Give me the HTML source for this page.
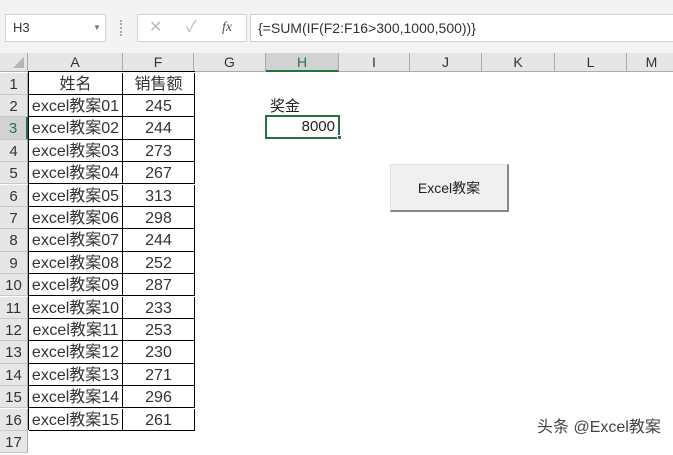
<!DOCTYPE html><html><head><style>
body{margin:0;width:673px;height:444px;overflow:hidden;background:#fff;font-family:"Liberation Sans","Noto Sans CJK SC",sans-serif;position:relative}
.a{position:absolute;box-sizing:border-box}
.ch{position:absolute;top:53px;height:19px;background:#e6e6e6;border-right:1px solid #ababab;border-bottom:1px solid #ababab;text-align:center;font-size:14px;line-height:19px;color:#333;box-sizing:border-box}
.rh{position:absolute;left:0;width:28px;background:#e6e6e6;border-bottom:1px solid #c8c8c8;border-right:1px solid #ababab;text-align:center;font-size:15px;color:#333;box-sizing:border-box}
.c{position:absolute;font-size:16px;color:#333;text-align:center;box-sizing:border-box;border-right:1px solid #000;border-bottom:1px solid #000;white-space:nowrap}
</style></head><body>
<div class="a" style="left:0;top:0;width:673px;height:53px;background:#f3f3f3"></div>
<div class="a" style="left:5px;top:14px;width:101px;height:28px;background:#fff;border:1px solid #d4d4d4;font-size:13px;line-height:26px;padding-left:7px;color:#333">H3<span style="position:absolute;left:87px;top:0;font-size:8px;color:#777">▼</span></div>
<div class="a" style="left:120px;top:20px;width:2px;height:16px;border-left:2px dotted #aaa"></div>
<div class="a" style="left:137px;top:14px;width:110px;height:28px;background:#fff;border:1px solid #d4d4d4;font-size:16px;line-height:26px;color:#bbb"><span style="position:absolute;left:11px">✕</span><span style="position:absolute;left:48px">✓</span><span style="position:absolute;left:84px;color:#555;font-family:'Liberation Serif',serif;font-style:italic;font-size:14px">fx</span></div>
<div class="a" style="left:250px;top:14px;width:430px;height:28px;background:#fff;border:1px solid #d4d4d4;font-size:14px;line-height:26px;padding-left:7px;color:#333">{=SUM(IF(F2:F16&gt;300,1000,500))}</div>
<div class="ch" style="left:0;width:28px"><span style="position:absolute;right:3px;bottom:3px;width:0;height:0;border-left:11px solid transparent;border-bottom:11px solid #b5b5b5"></span></div>
<div class="ch" style="left:28px;width:95px">A</div>
<div class="ch" style="left:123px;width:71px">F</div>
<div class="ch" style="left:194px;width:72px">G</div>
<div class="ch" style="left:266px;width:73px;background:#d2d2d2;border-bottom:2px solid #217346;color:#217346">H</div>
<div class="ch" style="left:339px;width:71px">I</div>
<div class="ch" style="left:410px;width:72px">J</div>
<div class="ch" style="left:482px;width:73px">K</div>
<div class="ch" style="left:555px;width:72px">L</div>
<div class="ch" style="left:627px;width:50px">M</div>
<div class="a" style="left:28px;top:71px;width:167px;height:1px;background:#000"></div>
<div class="a" style="left:28px;top:71px;width:1px;height:359px;background:#000"></div>
<div id="g"></div>
<div class="a" style="left:270px;top:95px;font-size:15px;color:#222">奖金</div>
<div class="a" style="left:265px;top:115px;width:75px;height:24px;border:2px solid #217346;font-size:15px;line-height:20px;text-align:right;padding-right:3px;color:#222">8000</div>
<div class="a" style="left:337px;top:135px;width:5px;height:5px;background:#217346;border:1px solid #fff"></div>
<div class="a" style="left:390px;top:164px;width:119px;height:48px;background:#f0f0f0;border:1px solid #e0e0e0;border-right:2px solid #888;border-bottom:2px solid #888;font-size:14px;line-height:46px;text-align:center;color:#222">Excel教案</div>
<div class="a" style="left:537px;top:413px;font-size:16px;color:#444">头条 @Excel教案</div>
<script>
var n=["245","244","273","267","313","298","244","252","287","233","253","230","271","296","261"],h="";
for(var i=0;i<17;i++){var t=72.5+i*22.4,hh=22.4;
h+='<div class="rh" style="top:'+t+'px;height:'+hh+'px;line-height:'+(hh+2)+'px;'+(i==2?'background:#d2d2d2;color:#217346;border-right:2px solid #217346;':'')+'">'+(i+1)+'</div>';
if(i<16){var a=i==0?"姓名":"excel教案"+(i<10?"0":"")+i,f=i==0?"销售额":n[i-1];
h+='<div class="c" style="left:29px;top:'+t+'px;width:94px;height:'+hh+'px;line-height:'+(hh+2)+'px">'+a+'</div>';
h+='<div class="c" style="left:123px;top:'+t+'px;width:72px;height:'+hh+'px;line-height:'+(hh+2)+'px">'+f+'</div>';}}
document.getElementById('g').innerHTML=h;
</script>
</body></html>
